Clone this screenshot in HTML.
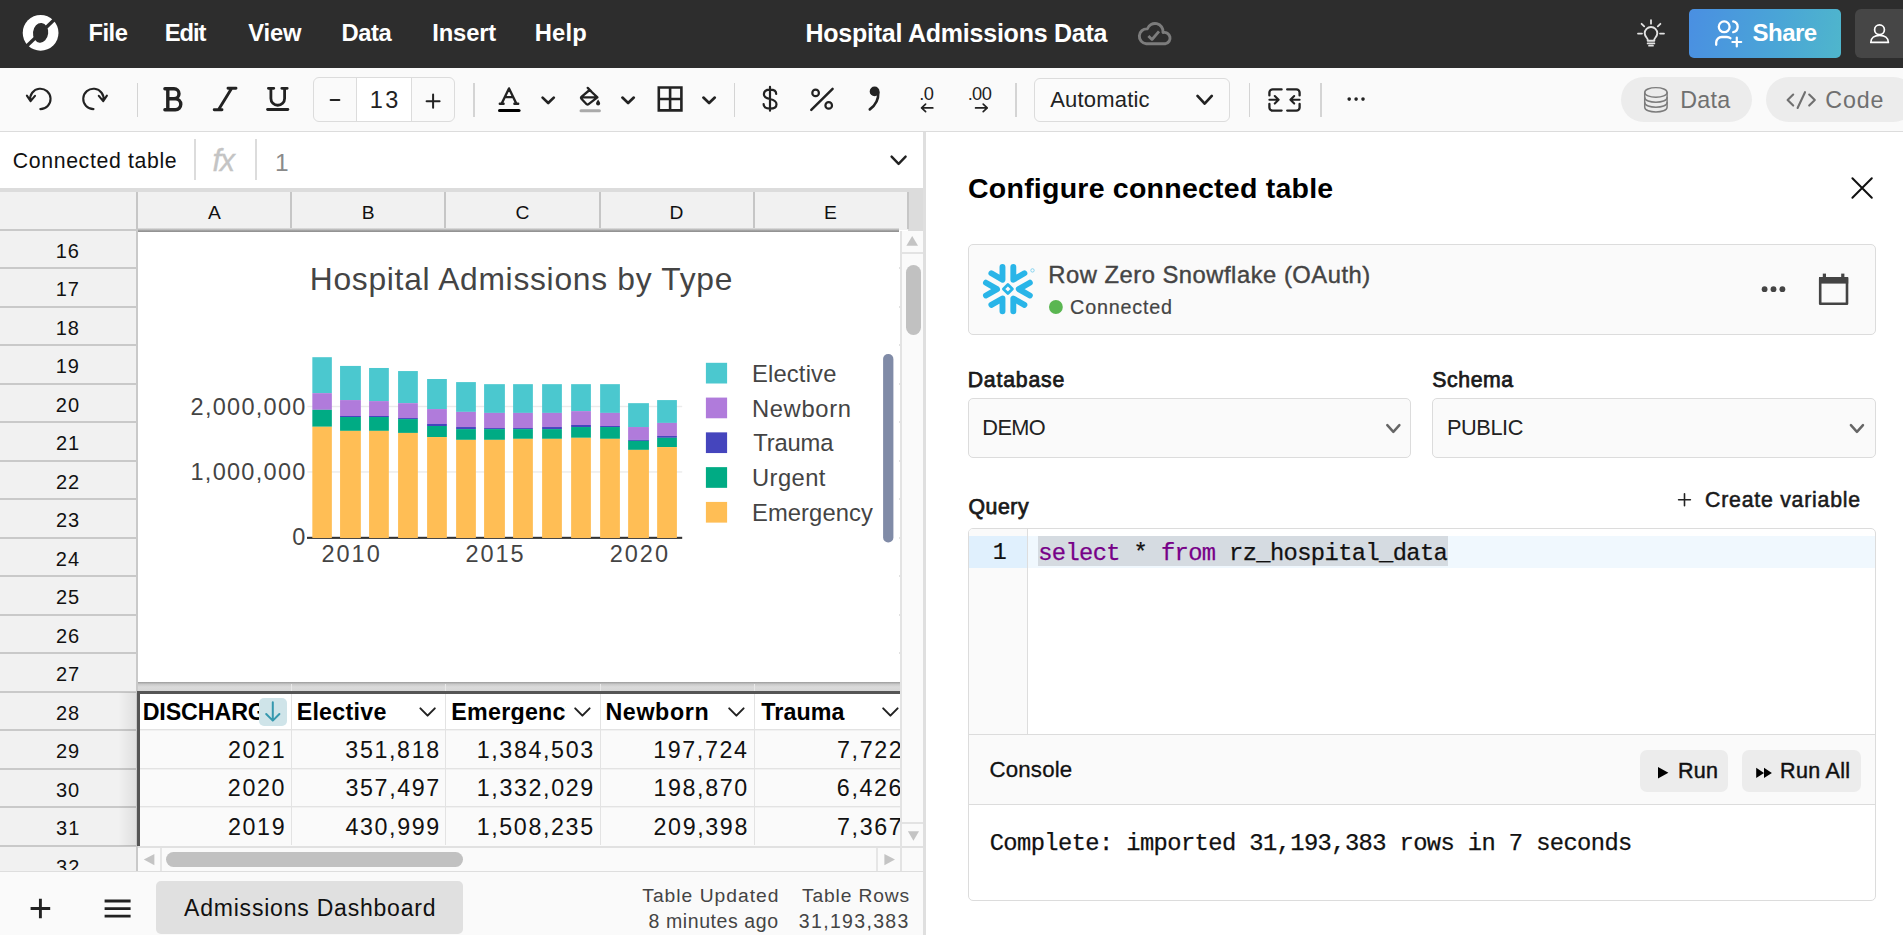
<!DOCTYPE html>
<html lang="en"><head><meta charset="utf-8"><title>Hospital Admissions Data</title><style>
html,body{margin:0;padding:0;overflow:hidden}
html{width:1903px;height:935px}
body{width:1903px;height:935px;overflow:hidden;background:#fff;position:relative;font-family:"Liberation Sans",sans-serif;color:#000}
.b{position:absolute;box-sizing:border-box}
.t{position:absolute;white-space:pre;line-height:1;display:block}
svg{overflow:visible}
</style></head>
<body>
<div class="b " style="left:0px;top:0px;width:1903px;height:68px;background:#2d2d2d;"></div>
<div class="b " style="left:1689px;top:9px;width:152px;height:49px;background:linear-gradient(100deg,#4a8fe2 0%,#4aa6d6 60%,#4fb6cc 100%);border-radius:5px"></div>
<div class="b " style="left:1855px;top:9px;width:60px;height:49px;background:#464646;border-radius:6px"></div>
<div class="b " style="left:0px;top:68px;width:1903px;height:64px;background:#fafafa;border-bottom:1px solid #dcdcdc"></div>
<div class="b " style="left:136.6px;top:82.5px;width:1.6px;height:34px;background:#d4d4d4;"></div>
<div class="b " style="left:473px;top:82.5px;width:1.6px;height:34px;background:#d4d4d4;"></div>
<div class="b " style="left:733.6px;top:82.5px;width:1.6px;height:34px;background:#d4d4d4;"></div>
<div class="b " style="left:1015.2px;top:82.5px;width:1.6px;height:34px;background:#d4d4d4;"></div>
<div class="b " style="left:1248.6px;top:82.5px;width:1.6px;height:34px;background:#d4d4d4;"></div>
<div class="b " style="left:1320px;top:82.5px;width:1.6px;height:34px;background:#d4d4d4;"></div>
<div class="b " style="left:313px;top:77px;width:142px;height:45px;background:#fafafa;border:1px solid #dcdcdc;border-radius:6px"></div>
<div class="b " style="left:356px;top:78px;width:56px;height:43px;background:#fff;border-left:1px solid #dcdcdc;border-right:1px solid #dcdcdc"></div>
<div class="b " style="left:1034px;top:78px;width:196px;height:44px;background:#fbfbfb;border:1px solid #dcdcdc;border-radius:6px"></div>
<div class="b " style="left:1621.2px;top:77px;width:130.5px;height:45px;background:#ececec;border-radius:22.5px"></div>
<div class="b " style="left:1766px;top:77px;width:150px;height:45px;background:#ececec;border-radius:22.5px"></div>
<div class="b " style="left:0px;top:132px;width:924px;height:56.2px;background:#fff;"></div>
<div class="b " style="left:194.2px;top:139.4px;width:1.7px;height:41px;background:#dcdcdc;"></div>
<div class="b " style="left:255.2px;top:139.4px;width:1.7px;height:41px;background:#dcdcdc;"></div>
<div class="b " style="left:0px;top:188.2px;width:924px;height:3.8px;background:#dcdcdc;"></div>
<div class="b " style="left:0px;top:192px;width:908px;height:38px;background:#f1f1f1;"></div>
<div class="b " style="left:908px;top:192px;width:16px;height:40px;background:#dcdcdc;"></div>
<div class="b " style="left:136px;top:192px;width:2px;height:37px;background:#c6c6c6;"></div>
<div class="b " style="left:290px;top:192px;width:2px;height:37px;background:#c6c6c6;"></div>
<div class="b " style="left:444px;top:192px;width:2px;height:37px;background:#c6c6c6;"></div>
<div class="b " style="left:599px;top:192px;width:2px;height:37px;background:#c6c6c6;"></div>
<div class="b " style="left:753px;top:192px;width:2px;height:37px;background:#c6c6c6;"></div>
<div class="b " style="left:907px;top:192px;width:2px;height:37px;background:#c6c6c6;"></div>
<div class="b " style="left:138px;top:231px;width:763px;height:616px;background:#fff;"></div>
<div class="b " style="left:899px;top:267px;width:3px;height:2px;background:#e2e2e2;"></div>
<div class="b " style="left:899px;top:306px;width:3px;height:2px;background:#e2e2e2;"></div>
<div class="b " style="left:899px;top:344px;width:3px;height:2px;background:#e2e2e2;"></div>
<div class="b " style="left:899px;top:383px;width:3px;height:2px;background:#e2e2e2;"></div>
<div class="b " style="left:899px;top:421px;width:3px;height:2px;background:#e2e2e2;"></div>
<div class="b " style="left:899px;top:460px;width:3px;height:2px;background:#e2e2e2;"></div>
<div class="b " style="left:899px;top:498px;width:3px;height:2px;background:#e2e2e2;"></div>
<div class="b " style="left:899px;top:537px;width:3px;height:2px;background:#e2e2e2;"></div>
<div class="b " style="left:899px;top:575px;width:3px;height:2px;background:#e2e2e2;"></div>
<div class="b " style="left:899px;top:614px;width:3px;height:2px;background:#e2e2e2;"></div>
<div class="b " style="left:899px;top:652px;width:3px;height:2px;background:#e2e2e2;"></div>
<div class="b " style="left:138px;top:682px;width:762px;height:9px;background:linear-gradient(#9a9a9a 0%,#c9c9c9 25%,#dadada 55%,#d6d6d6 100%);"></div>
<div class="b " style="left:291px;top:684px;width:1px;height:7px;background:#e9e9e9;"></div>
<div class="b " style="left:445px;top:684px;width:1px;height:7px;background:#e9e9e9;"></div>
<div class="b " style="left:600px;top:684px;width:1px;height:7px;background:#e9e9e9;"></div>
<div class="b " style="left:754px;top:684px;width:1px;height:7px;background:#e9e9e9;"></div>
<div class="b " style="left:138px;top:228px;width:761px;height:4px;background:linear-gradient(#e4e4e4 0%,#c6c6c6 30%,#a0a0a0 65%,#8c8c8c 100%);"></div>
<div class="b " style="left:138px;top:232px;width:761px;height:450px;background:#fff;"></div>
<div class="b " style="left:0px;top:229px;width:136px;height:646px;background:#f1f1f1;"></div>
<div class="b " style="left:136px;top:229px;width:2px;height:646px;background:#c9c9c9;"></div>
<div class="b " style="left:0px;top:229px;width:137px;height:2px;background:#c9c9c9;"></div>
<div class="b " style="left:0px;top:267px;width:137px;height:2px;background:#c9c9c9;"></div>
<div class="b " style="left:0px;top:306px;width:137px;height:2px;background:#c9c9c9;"></div>
<div class="b " style="left:0px;top:344px;width:137px;height:2px;background:#c9c9c9;"></div>
<div class="b " style="left:0px;top:383px;width:137px;height:2px;background:#c9c9c9;"></div>
<div class="b " style="left:0px;top:421px;width:137px;height:2px;background:#c9c9c9;"></div>
<div class="b " style="left:0px;top:460px;width:137px;height:2px;background:#c9c9c9;"></div>
<div class="b " style="left:0px;top:498px;width:137px;height:2px;background:#c9c9c9;"></div>
<div class="b " style="left:0px;top:537px;width:137px;height:2px;background:#c9c9c9;"></div>
<div class="b " style="left:0px;top:575px;width:137px;height:2px;background:#c9c9c9;"></div>
<div class="b " style="left:0px;top:614px;width:137px;height:2px;background:#c9c9c9;"></div>
<div class="b " style="left:0px;top:652px;width:137px;height:2px;background:#c9c9c9;"></div>
<div class="b " style="left:0px;top:691px;width:137px;height:2px;background:#c9c9c9;"></div>
<div class="b " style="left:0px;top:729px;width:137px;height:2px;background:#c9c9c9;"></div>
<div class="b " style="left:0px;top:768px;width:137px;height:2px;background:#c9c9c9;"></div>
<div class="b " style="left:0px;top:806px;width:137px;height:2px;background:#c9c9c9;"></div>
<div class="b " style="left:0px;top:845px;width:137px;height:2px;background:#c9c9c9;"></div>
<div class="b " style="left:0px;top:883px;width:137px;height:2px;background:#c9c9c9;"></div>
<div class="b " style="left:138px;top:693.8px;width:762.5px;height:35.4px;background:#fff;"></div>
<div class="b " style="left:138px;top:729.2px;width:762.5px;height:116.5px;background:#fafafa;"></div>
<div class="b " style="left:138px;top:729px;width:762px;height:1px;background:#e3e3e3;"></div>
<div class="b " style="left:138px;top:730px;width:762px;height:1px;background:#f1f1f1;"></div>
<div class="b " style="left:138px;top:768px;width:762px;height:1px;background:#e3e3e3;"></div>
<div class="b " style="left:138px;top:769px;width:762px;height:1px;background:#f1f1f1;"></div>
<div class="b " style="left:138px;top:806px;width:762px;height:1px;background:#e3e3e3;"></div>
<div class="b " style="left:138px;top:807px;width:762px;height:1px;background:#f1f1f1;"></div>
<div class="b " style="left:291px;top:694px;width:1px;height:151px;background:#e3e3e3;"></div>
<div class="b " style="left:445px;top:694px;width:1px;height:151px;background:#e3e3e3;"></div>
<div class="b " style="left:600px;top:694px;width:1px;height:151px;background:#e3e3e3;"></div>
<div class="b " style="left:754px;top:694px;width:1px;height:151px;background:#e3e3e3;"></div>
<div class="b " style="left:136.5px;top:691px;width:764px;height:3.1px;background:#555;"></div>
<div class="b " style="left:136.5px;top:691px;width:3.2px;height:154.6px;background:#555;"></div>
<div class="b " style="left:118px;top:692px;width:18px;height:154px;background:linear-gradient(90deg,rgba(0,0,0,0),rgba(0,0,0,0.07));"></div>
<div class="b " style="left:259.1px;top:697.8px;width:27.5px;height:27.8px;background:#cfe4e9;border-radius:5px"></div>
<div class="b " style="left:900px;top:231px;width:24px;height:616px;background:#fafafa;"></div>
<div class="b " style="left:902px;top:252px;width:22px;height:2px;background:#e3e3e3;"></div>
<div class="b " style="left:902px;top:822px;width:22px;height:2px;background:#e3e3e3;"></div>
<div class="b " style="left:906px;top:265px;width:15px;height:70px;background:#c1c1c1;border-radius:7.5px"></div>
<div class="b " style="left:138px;top:846px;width:786px;height:26px;background:#fafafa;"></div>
<div class="b " style="left:138px;top:846px;width:786px;height:2px;background:#e1e1e1;"></div>
<div class="b " style="left:160px;top:848px;width:2px;height:24px;background:#e6e6e6;"></div>
<div class="b " style="left:900px;top:231px;width:2px;height:641px;background:#e3e3e3;"></div>
<div class="b " style="left:876px;top:848px;width:2px;height:24px;background:#e6e6e6;"></div>
<div class="b " style="left:166px;top:852px;width:297px;height:15px;background:#c1c1c1;border-radius:7.5px"></div>
<div class="b " style="left:0px;top:871.4px;width:924px;height:64px;background:#fafafa;border-top:1.7px solid #dedede"></div>
<div class="b " style="left:156px;top:881px;width:307px;height:52.8px;background:#e0e0e0;border-radius:5px"></div>
<div class="b " style="left:923.4px;top:131.6px;width:2.7px;height:804px;background:#dfdfdf;"></div>
<div class="b " style="left:926px;top:132px;width:977px;height:803px;background:#fff;"></div>
<div class="b " style="left:968px;top:244px;width:908px;height:91px;background:#fafafa;border:1px solid #dcdcdc;border-radius:5px"></div>
<div class="b " style="left:968px;top:398px;width:443px;height:60px;background:#fafafa;border:1px solid #dcdcdc;border-radius:5px"></div>
<div class="b " style="left:1432px;top:398px;width:444px;height:60px;background:#fafafa;border:1px solid #dcdcdc;border-radius:5px"></div>
<div class="b " style="left:968px;top:528px;width:908px;height:373px;background:#fff;border:1px solid #dcdcdc;border-radius:5px"></div>
<div class="b " style="left:969px;top:529px;width:59px;height:206px;background:#fafafa;border-right:1px solid #dddddd;border-top-left-radius:4px"></div>
<div class="b " style="left:969px;top:536px;width:58px;height:32px;background:#e0f0fd;"></div>
<div class="b " style="left:1028px;top:536px;width:847px;height:32px;background:#f0f8fe;"></div>
<div class="b " style="left:1038px;top:536px;width:410px;height:30px;background:#d5dbe1;"></div>
<div class="b " style="left:969px;top:734px;width:906px;height:71px;background:#fafafa;border-top:1px solid #dcdcdc;border-bottom:1px solid #dcdcdc"></div>
<div class="b " style="left:1640px;top:750px;width:88px;height:42px;background:#ececec;border-radius:7px"></div>
<div class="b " style="left:1742px;top:750px;width:119px;height:42px;background:#ececec;border-radius:7px"></div>
<svg class="b" style="left:0px;top:0px;pointer-events:none" width="1903" height="935" viewBox="0 0 1903 935"><circle cx="40.6" cy="32.8" r="17.9" fill="#fff"/>
<ellipse cx="40.6" cy="32.8" rx="7.6" ry="9.9" fill="#2d2d2d" transform="rotate(6 40.6 32.8)"/>
<path d="M26.0,46.8 L55.2,18.799999999999997" stroke="#2d2d2d" stroke-width="3.3" fill="none"/>
<path d="M1146.2,43.7 H1165.6 A5.7,5.7 0 1 0 1163,32.5 A8.1,8.1 0 0 0 1147.3,28.9 A7.4,7.4 0 1 0 1146.2,43.7 Z" fill="none" stroke="#7c7c7c" stroke-width="2.9" stroke-linecap="round" stroke-linejoin="round" />
<path d="M1148.4,35.9 L1152,39.5 L1159,31.4" fill="none" stroke="#7c7c7c" stroke-width="2.8"  stroke-linejoin="round" stroke-linecap="butt"/>
<path d="M1647.6,43.4 H1654.4 M1649,45.7 H1653" fill="none" stroke="#e2e2e2" stroke-width="1.7" stroke-linecap="round" stroke-linejoin="round" />
<path d="M1647.7,40.7 H1654.3 V39.6 C1654.3,38.2 1657.3,36.6 1657.3,33.3 A6.3,6.3 0 0 0 1644.7,33.3 C1644.7,36.6 1647.7,38.2 1647.7,39.6 Z" fill="none" stroke="#e2e2e2" stroke-width="1.9" stroke-linecap="round" stroke-linejoin="round" />
<path d="M1651,20.2 V23.7 M1641.6,23.8 L1644.2,26.4 M1660.4,23.8 L1657.8,26.4 M1638,33.6 H1642 M1660,33.6 H1664" fill="none" stroke="#e2e2e2" stroke-width="1.8" stroke-linecap="round" stroke-linejoin="round" />
<circle cx="1724.2" cy="26.8" r="5.4" fill="none" stroke="#fff" stroke-width="2.3"/>
<path d="M1716.2,44.8 V42.6 A5.6,5.6 0 0 1 1721.8,37 H1727 A5.6,5.6 0 0 1 1730.4,38.2" fill="none" stroke="#fff" stroke-width="2.3" stroke-linecap="round" stroke-linejoin="round" />
<path d="M1733.2,21.4 A5.5,5.5 0 0 1 1733.2,32.2" fill="none" stroke="#fff" stroke-width="2.3" stroke-linecap="round" stroke-linejoin="round" />
<path d="M1736.8,37.6 V46.4 M1732.4,42 H1741.2" fill="none" stroke="#fff" stroke-width="2.2" stroke-linecap="round" stroke-linejoin="round" />
<circle cx="1879.5" cy="29.7" r="4.9" fill="none" stroke="#fff" stroke-width="1.7"/>
<path d="M1870.8,42.4 H1888.4 C1888.4,37.8 1884.6,35.3 1879.6,35.3 C1874.6,35.3 1870.8,37.8 1870.8,42.4 Z" fill="none" stroke="#fff" stroke-width="1.7" stroke-linecap="round" stroke-linejoin="round" />
<path d="M30.3,100.6 A10.2,10.2 0 1 1 40.3,109.1 M26.9,95.7 L30.6,101.2 L35,95.9" fill="none" stroke="#222" stroke-width="2.1" stroke-linecap="round" stroke-linejoin="round" />
<path d="M103.5,100.6 A10.2,10.2 0 1 0 93.5,109.1 M106.9,95.7 L103.2,101.2 L98.8,95.9" fill="none" stroke="#222" stroke-width="2.1" stroke-linecap="round" stroke-linejoin="round" />
<path d="M164.9,88.8 H174 A5,5 0 0 1 174,98.8 H167.8 M174,98.8 H175.3 A5.5,5.5 0 0 1 175.3,109.8 H164.9 M167.8,88.8 V109.8" fill="none" stroke="#222" stroke-width="3.4" stroke-linecap="round" stroke-linejoin="round" />
<path d="M228,88.2 H236 M214.2,109.8 H222 M231.7,88.2 L218.5,109.8" fill="none" stroke="#222" stroke-width="2.9" stroke-linecap="round" stroke-linejoin="round" />
<path d="M268.4,88.3 H273.8 M281.8,88.3 H287.2 M270.9,88.3 V98.4 A6.85,6.85 0 0 0 284.6,98.4 V88.3" fill="none" stroke="#222" stroke-width="2.8" stroke-linecap="round" stroke-linejoin="round" />
<path d="M267.6,109.5 H287.8" fill="none" stroke="#222" stroke-width="2.9" stroke-linecap="round" stroke-linejoin="round" />
<path d="M330.6,99.9 H339.4" fill="none" stroke="#222" stroke-width="2.0" stroke-linecap="round" stroke-linejoin="round" />
<path d="M426.6,101.2 H439.6 M433.1,94.6 V107.8" fill="none" stroke="#222" stroke-width="2.0" stroke-linecap="round" stroke-linejoin="round" />
<path d="M499.8,103.8 H503.6 M514.4,103.8 H518.2 M501.7,103.6 L509,88.4 L516.3,103.6 M505,97.1 H513" fill="none" stroke="#222" stroke-width="2.4" stroke-linecap="round" stroke-linejoin="round" />
<rect x="498" y="108.9" width="22.6" height="3.2" rx="1.6" fill="#000"/>
<path d="M542.6,97.6 L548.2,103.0 L553.8,97.6" fill="none" stroke="#222" stroke-width="2.7" stroke-linecap="round" stroke-linejoin="round" />
<path d="M589.6,90 L597.4,97.4 L588.6,104.2 Q587.6,105 586.6,104.2 L581.4,98.8 Q580.6,97.8 581.4,96.9 Z M581,97.4 H597.4 M587.7,87.9 L591.2,91.4" fill="none" stroke="#222" stroke-width="2.3" stroke-linecap="round" stroke-linejoin="round" />
<path d="M598.1,99.6 C599.3,101.2 600.1,102.4 600.1,103.5 A2,2 0 0 1 596.1,103.5 C596.1,102.4 596.9,101.2 598.1,99.6 Z" fill="#222"/>
<rect x="579.5" y="109.2" width="21.4" height="3" rx="1.5" fill="#aaa"/>
<path d="M622.4,97.6 L628.0999999999999,103.0 L633.8,97.6" fill="none" stroke="#222" stroke-width="2.7" stroke-linecap="round" stroke-linejoin="round" />
<path d="M658.8,87.5 H681.4 V110.4 H658.8 Z M670.1,87.5 V110.4 M658.8,99 H681.4" fill="none" stroke="#222" stroke-width="2.6" stroke-linecap="round"  stroke-linejoin="miter"/>
<path d="M703.4,97.6 L709.0999999999999,103.0 L714.8,97.6" fill="none" stroke="#222" stroke-width="2.7" stroke-linecap="round" stroke-linejoin="round" />
<path d="M770,86.9 V110.7 M776.2,93.9 C776.2,91 773.6,89.6 770,89.6 C766.4,89.6 763.9,91.2 763.9,94.2 C763.9,97.3 766.6,98.3 770,99 C773.6,99.8 776.5,100.9 776.5,104.2 C776.5,107.2 773.8,108.6 770,108.6 C766.2,108.6 763.6,107 763.6,104" fill="none" stroke="#222" stroke-width="2.2" stroke-linecap="round" stroke-linejoin="round" />
<path d="M811.3,109.8 L832.6,88.9" fill="none" stroke="#222" stroke-width="2.5" stroke-linecap="round" stroke-linejoin="round" />
<circle cx="815.6" cy="92.9" r="3.3" fill="none" stroke="#222" stroke-width="2.2"/>
<circle cx="828.7" cy="105.4" r="3.3" fill="none" stroke="#222" stroke-width="2.2"/>
<circle cx="874.6" cy="91.4" r="4.9" fill="#222" stroke="none" stroke-width="0"/>
<path d="M878.3,92.6 C878.6,100 875,105.6 869.8,109.4" fill="none" stroke="#222" stroke-width="2.6" stroke-linecap="round" stroke-linejoin="round" />
<path d="M921.6,107.9 H932.8 M925.6,104.2 L921.6,107.9 L925.6,111.6" fill="none" stroke="#222" stroke-width="1.7" stroke-linecap="round" stroke-linejoin="round" />
<path d="M975.6,107.9 H987.2 M983.2,104.2 L987.2,107.9 L983.2,111.6" fill="none" stroke="#222" stroke-width="1.7" stroke-linecap="round" stroke-linejoin="round" />
<path d="M1197.5,95.9 L1204.65,103.6 L1211.8,95.9" fill="none" stroke="#222" stroke-width="2.7" stroke-linecap="round" stroke-linejoin="round" />
<path d="M1281.6,89.4 H1272.6 A3.2,3.2 0 0 0 1269.4,92.6 V95.4 M1269.4,104 V107.4 A3.2,3.2 0 0 0 1272.6,110.6 H1281.6" fill="none" stroke="#222" stroke-width="2.3" stroke-linecap="round" stroke-linejoin="round" />
<path d="M1287.2,89.4 H1296.4 A3.2,3.2 0 0 1 1299.6,92.6 V95.4 M1299.6,104 V107.4 A3.2,3.2 0 0 1 1296.4,110.6 H1287.2" fill="none" stroke="#222" stroke-width="2.3" stroke-linecap="round" stroke-linejoin="round" />
<path d="M1269.4,99.8 H1278.4 M1274.8,96 L1278.6,99.8 L1274.8,103.6" fill="none" stroke="#222" stroke-width="2.1" stroke-linecap="round" stroke-linejoin="round" />
<path d="M1299.6,99.8 H1290.6 M1294.2,96 L1290.4,99.8 L1294.2,103.6" fill="none" stroke="#222" stroke-width="2.1" stroke-linecap="round" stroke-linejoin="round" />
<circle cx="1349.2" cy="99.1" r="1.8" fill="#222" stroke="none" stroke-width="0"/>
<circle cx="1356.1" cy="99.1" r="1.8" fill="#222" stroke="none" stroke-width="0"/>
<circle cx="1363" cy="99.1" r="1.8" fill="#222" stroke="none" stroke-width="0"/>
<ellipse cx="1655.9" cy="92.4" rx="11.2" ry="4.8" fill="none" stroke="#7c7c7c" stroke-width="1.45"/>
<path d="M1644.7,92.4 V107.2 C1644.7,113.6 1667.1,113.6 1667.1,107.2 V92.4" fill="none" stroke="#7c7c7c" stroke-width="1.45" stroke-linecap="round" stroke-linejoin="round" />
<path d="M1644.7,97.4 C1644.7,103.8 1667.1,103.8 1667.1,97.4 M1644.7,102.4 C1644.7,108.8 1667.1,108.8 1667.1,102.4" fill="none" stroke="#7c7c7c" stroke-width="1.45" stroke-linecap="round" stroke-linejoin="round" />
<path d="M1793.2,94.6 L1787.6,100.1 L1793.2,105.6 M1805,92.2 L1797.6,108 M1809.2,94.6 L1814.8,100.1 L1809.2,105.6" fill="none" stroke="#707070" stroke-width="2.1" stroke-linecap="round" stroke-linejoin="round" />
<path d="M891.6,156.6 L898.6,163.9 L905.6,156.6" fill="none" stroke="#222" stroke-width="2.4" stroke-linecap="round" stroke-linejoin="round" />
<path d="M420.40000000000003,708.4 L427.6,715.6 L434.8,708.4" fill="none" stroke="#222" stroke-width="2.0" stroke-linecap="round" stroke-linejoin="round" />
<path d="M575.1999999999999,708.4 L582.4,715.6 L589.6,708.4" fill="none" stroke="#222" stroke-width="2.0" stroke-linecap="round" stroke-linejoin="round" />
<path d="M729.1999999999999,708.4 L736.4,715.6 L743.6,708.4" fill="none" stroke="#222" stroke-width="2.0" stroke-linecap="round" stroke-linejoin="round" />
<path d="M883.1999999999999,708.4 L890.4,715.6 L897.6,708.4" fill="none" stroke="#222" stroke-width="2.0" stroke-linecap="round" stroke-linejoin="round" />
<path d="M272.8,702.2 V720.4 M266.2,714 L272.8,720.6 L279.4,714" fill="none" stroke="#3598ae" stroke-width="2.0" stroke-linecap="round" stroke-linejoin="round" />
<path d="M912.2,236 L918,245.8 H906.4 Z" fill="#c4c4c4"/>
<path d="M907.9,831.2 H919 L913.45,840.8 Z" fill="#c4c4c4"/>
<path d="M143.8,859.6 L154.4,854 V865.2 Z" fill="#c4c4c4"/>
<path d="M895,859.6 L884.4,854 V865.2 Z" fill="#c4c4c4"/>
<path d="M30.6,908.5 H50.2 M40.4,898.8 V918.2" fill="none" stroke="#222" stroke-width="2.9"  stroke-linejoin="round" stroke-linecap="butt"/>
<path d="M104.6,901 H130.6 M104.6,908.6 H130.6 M104.6,916.2 H130.6" fill="none" stroke="#222" stroke-width="2.8"  stroke-linejoin="round" stroke-linecap="butt"/>
<path d="M1852.4,178.3 L1871.8,197.8 M1871.8,178.3 L1852.4,197.8" fill="none" stroke="#111" stroke-width="2.0" stroke-linecap="round" stroke-linejoin="round" />
<path d="M1029.84,282.70 L1018.75,289.10 L1029.84,295.50" fill="none" stroke="#29b5e8" stroke-width="5.9" stroke-linecap="round" stroke-linejoin="round" />
<path d="M1013.32,266.90 L1013.32,279.70 L1024.41,273.30" fill="none" stroke="#29b5e8" stroke-width="5.9" stroke-linecap="round" stroke-linejoin="round" />
<path d="M991.39,273.30 L1002.48,279.70 L1002.48,266.90" fill="none" stroke="#29b5e8" stroke-width="5.9" stroke-linecap="round" stroke-linejoin="round" />
<path d="M985.96,295.50 L997.05,289.10 L985.96,282.70" fill="none" stroke="#29b5e8" stroke-width="5.9" stroke-linecap="round" stroke-linejoin="round" />
<path d="M1002.48,311.30 L1002.48,298.50 L991.39,304.90" fill="none" stroke="#29b5e8" stroke-width="5.9" stroke-linecap="round" stroke-linejoin="round" />
<path d="M1024.41,304.90 L1013.32,298.50 L1013.32,311.30" fill="none" stroke="#29b5e8" stroke-width="5.9" stroke-linecap="round" stroke-linejoin="round" />
<path d="M1007.9,284.6 L1012.4,289.1 L1007.9,293.6 L1003.4,289.1 Z" fill="none" stroke="#29b5e8" stroke-width="2.8" stroke-linecap="round" stroke-linejoin="round" />
<circle cx="1032.5" cy="270.4" r="1.7" fill="none" stroke="#7dd0ef" stroke-width="0.9"/>
<circle cx="1055.9" cy="307" r="6.9" fill="#5ab651" stroke="none" stroke-width="0"/>
<circle cx="1764.6" cy="289.2" r="2.9" fill="#444" stroke="none" stroke-width="0"/>
<circle cx="1773.5" cy="289.2" r="2.9" fill="#444" stroke="none" stroke-width="0"/>
<circle cx="1782.4" cy="289.2" r="2.9" fill="#444" stroke="none" stroke-width="0"/>
<path d="M1820.2,278.4 H1847 V303.8 H1820.2 Z" fill="none" stroke="#444" stroke-width="2.6" stroke-linejoin="round"/>
<rect x="1819" y="277" width="29.2" height="6.6" fill="#444"/>
<rect x="1822.8" y="273.6" width="3.2" height="5" fill="#444"/><rect x="1841.2" y="273.6" width="3.2" height="5" fill="#444"/>
<path d="M1387.3,425.2 L1393.35,431.8 L1399.4,425.2" fill="none" stroke="#666" stroke-width="2.5" stroke-linecap="round" stroke-linejoin="round" />
<path d="M1850.9,425.2 L1856.95,431.8 L1863,425.2" fill="none" stroke="#666" stroke-width="2.5" stroke-linecap="round" stroke-linejoin="round" />
<path d="M1678.6,499.8 H1690.4 M1684.5,493.8 V505.8" fill="none" stroke="#222" stroke-width="1.6" stroke-linecap="round" stroke-linejoin="round" />
<path d="M1658,766.9 L1668.4,772.7 L1658,778.5 Z" fill="#000"/>
<path d="M1756.2,767.7 L1764,772.9 L1756.2,778.1 Z M1764,767.7 L1771.9,772.9 L1764,778.1 Z" fill="#000"/></svg>
<svg class="b" style="left:0px;top:0px;pointer-events:none" width="1903" height="935" viewBox="0 0 1903 935"><rect x="307.4" y="405.79" width="374.8" height="1.4" fill="#ebebeb"/>
<rect x="307.4" y="471.26" width="374.8" height="1.4" fill="#ebebeb"/>
<rect x="307" y="536.8" width="375.2" height="2.1" fill="#333"/>
<rect x="312.34" y="357.20" width="19.51" height="35.94" fill="#4bc8cf"/>
<rect x="312.34" y="393.14" width="19.51" height="16.69" fill="#b07bdb"/>
<rect x="312.34" y="409.83" width="19.51" height="16.94" fill="#00ab84"/>
<rect x="312.34" y="426.78" width="19.51" height="111.22" fill="#ffbe55"/>
<rect x="340.06" y="365.93" width="20.80" height="34.15" fill="#4bc8cf"/>
<rect x="340.06" y="400.08" width="20.80" height="15.92" fill="#b07bdb"/>
<rect x="340.06" y="415.99" width="20.80" height="1.03" fill="#4545bd"/>
<rect x="340.06" y="417.02" width="20.80" height="13.86" fill="#00ab84"/>
<rect x="340.06" y="430.88" width="20.80" height="107.12" fill="#ffbe55"/>
<rect x="369.07" y="367.98" width="19.77" height="33.12" fill="#4bc8cf"/>
<rect x="369.07" y="401.10" width="19.77" height="14.89" fill="#b07bdb"/>
<rect x="369.07" y="415.99" width="19.77" height="1.03" fill="#4545bd"/>
<rect x="369.07" y="417.02" width="19.77" height="13.86" fill="#00ab84"/>
<rect x="369.07" y="430.88" width="19.77" height="107.12" fill="#ffbe55"/>
<rect x="398.08" y="371.06" width="19.77" height="32.09" fill="#4bc8cf"/>
<rect x="398.08" y="403.16" width="19.77" height="14.89" fill="#b07bdb"/>
<rect x="398.08" y="418.05" width="19.77" height="1.03" fill="#4545bd"/>
<rect x="398.08" y="419.07" width="19.77" height="13.86" fill="#00ab84"/>
<rect x="398.08" y="432.94" width="19.77" height="105.06" fill="#ffbe55"/>
<rect x="427.09" y="379.02" width="19.77" height="30.04" fill="#4bc8cf"/>
<rect x="427.09" y="409.06" width="19.77" height="14.89" fill="#b07bdb"/>
<rect x="427.09" y="423.95" width="19.77" height="2.05" fill="#4545bd"/>
<rect x="427.09" y="426.01" width="19.77" height="11.04" fill="#00ab84"/>
<rect x="427.09" y="437.04" width="19.77" height="100.96" fill="#ffbe55"/>
<rect x="456.11" y="382.10" width="19.77" height="29.78" fill="#4bc8cf"/>
<rect x="456.11" y="411.88" width="19.77" height="15.15" fill="#b07bdb"/>
<rect x="456.11" y="427.03" width="19.77" height="2.05" fill="#4545bd"/>
<rect x="456.11" y="429.09" width="19.77" height="10.78" fill="#00ab84"/>
<rect x="456.11" y="439.87" width="19.77" height="98.13" fill="#ffbe55"/>
<rect x="484.09" y="384.16" width="20.80" height="28.75" fill="#4bc8cf"/>
<rect x="484.09" y="412.91" width="20.80" height="15.15" fill="#b07bdb"/>
<rect x="484.09" y="428.06" width="20.80" height="1.03" fill="#4545bd"/>
<rect x="484.09" y="429.09" width="20.80" height="10.78" fill="#00ab84"/>
<rect x="484.09" y="439.87" width="20.80" height="98.13" fill="#ffbe55"/>
<rect x="513.10" y="384.16" width="19.77" height="28.75" fill="#4bc8cf"/>
<rect x="513.10" y="412.91" width="19.77" height="15.15" fill="#b07bdb"/>
<rect x="513.10" y="428.06" width="19.77" height="1.03" fill="#4545bd"/>
<rect x="513.10" y="429.09" width="19.77" height="9.76" fill="#00ab84"/>
<rect x="513.10" y="438.84" width="19.77" height="99.16" fill="#ffbe55"/>
<rect x="542.11" y="384.16" width="19.77" height="28.75" fill="#4bc8cf"/>
<rect x="542.11" y="412.91" width="19.77" height="14.12" fill="#b07bdb"/>
<rect x="542.11" y="427.03" width="19.77" height="2.05" fill="#4545bd"/>
<rect x="542.11" y="429.09" width="19.77" height="9.76" fill="#00ab84"/>
<rect x="542.11" y="438.84" width="19.77" height="99.16" fill="#ffbe55"/>
<rect x="571.12" y="384.16" width="19.77" height="26.96" fill="#4bc8cf"/>
<rect x="571.12" y="411.11" width="19.77" height="13.86" fill="#b07bdb"/>
<rect x="571.12" y="424.98" width="19.77" height="2.05" fill="#4545bd"/>
<rect x="571.12" y="427.03" width="19.77" height="10.78" fill="#00ab84"/>
<rect x="571.12" y="437.81" width="19.77" height="100.19" fill="#ffbe55"/>
<rect x="600.13" y="384.16" width="19.77" height="28.75" fill="#4bc8cf"/>
<rect x="600.13" y="412.91" width="19.77" height="13.09" fill="#b07bdb"/>
<rect x="600.13" y="426.01" width="19.77" height="1.03" fill="#4545bd"/>
<rect x="600.13" y="427.03" width="19.77" height="11.81" fill="#00ab84"/>
<rect x="600.13" y="438.84" width="19.77" height="99.16" fill="#ffbe55"/>
<rect x="628.12" y="403.16" width="20.80" height="23.88" fill="#4bc8cf"/>
<rect x="628.12" y="427.03" width="20.80" height="12.84" fill="#b07bdb"/>
<rect x="628.12" y="439.87" width="20.80" height="1.03" fill="#4545bd"/>
<rect x="628.12" y="440.90" width="20.80" height="8.99" fill="#00ab84"/>
<rect x="628.12" y="449.88" width="20.80" height="88.12" fill="#ffbe55"/>
<rect x="657.13" y="400.08" width="19.77" height="22.85" fill="#4bc8cf"/>
<rect x="657.13" y="422.92" width="19.77" height="13.09" fill="#b07bdb"/>
<rect x="657.13" y="436.02" width="19.77" height="1.80" fill="#4545bd"/>
<rect x="657.13" y="437.81" width="19.77" height="9.24" fill="#00ab84"/>
<rect x="657.13" y="447.06" width="19.77" height="90.94" fill="#ffbe55"/>
<rect x="705.9" y="362.80" width="21.2" height="20.7" fill="#4bc8cf"/>
<rect x="705.9" y="397.58" width="21.2" height="20.7" fill="#b07bdb"/>
<rect x="705.9" y="432.36" width="21.2" height="20.7" fill="#4545bd"/>
<rect x="705.9" y="467.14" width="21.2" height="20.7" fill="#00ab84"/>
<rect x="705.9" y="501.92" width="21.2" height="20.7" fill="#ffbe55"/>
<rect x="883.1" y="354.1" width="10.3" height="188.3" rx="5" fill="#808ba7"/></svg>
<span class="t" style="left:88.41px;top:21px;font-size:23.75px;letter-spacing:-0.471px;font-weight:700;color:#fff;">File</span>
<span class="t" style="left:164.81px;top:21px;font-size:23.75px;letter-spacing:-1.059px;font-weight:700;color:#fff;">Edit</span>
<span class="t" style="left:248.14px;top:21px;font-size:23.75px;letter-spacing:-0.092px;font-weight:700;color:#fff;">View</span>
<span class="t" style="left:341.41px;top:21px;font-size:23.75px;letter-spacing:-0.413px;font-weight:700;color:#fff;">Data</span>
<span class="t" style="left:432.31px;top:21px;font-size:23.75px;letter-spacing:-0.139px;font-weight:700;color:#fff;">Insert</span>
<span class="t" style="left:534.81px;top:21px;font-size:23.75px;letter-spacing:0.166px;font-weight:700;color:#fff;">Help</span>
<span class="t" style="left:805.53px;top:21px;font-size:25.0px;letter-spacing:-0.238px;font-weight:700;color:#fff;">Hospital Admissions Data</span>
<span class="t" style="left:1752.51px;top:21px;font-size:24.0px;letter-spacing:-0.498px;font-weight:700;color:#fff;">Share</span>
<span class="t" style="left:369.71px;top:89px;font-size:23.5px;letter-spacing:2.384px;color:#222;">13</span>
<span class="t" style="left:919.23px;top:85px;font-size:18.25px;letter-spacing:-0.641px;color:#222;">.0</span>
<span class="t" style="left:967.63px;top:85px;font-size:18.25px;letter-spacing:-0.595px;color:#222;">.00</span>
<span class="t" style="left:1050.16px;top:89px;font-size:22.0px;letter-spacing:0.201px;color:#222;">Automatic</span>
<span class="t" style="left:1680.29px;top:89px;font-size:23.25px;letter-spacing:0.232px;color:#707070;">Data</span>
<span class="t" style="left:1825.32px;top:89px;font-size:23.25px;letter-spacing:0.811px;color:#707070;">Code</span>
<span class="t" style="left:12.72px;top:151px;font-size:21.25px;letter-spacing:0.654px;color:#111;">Connected table</span>
<span class="t" style="left:212.57px;top:145px;font-size:30.5px;letter-spacing:-1.190px;font-style:italic;color:#c4c4c4;-webkit-text-stroke:0.35px #c4c4c4;">fx</span>
<span class="t" style="left:274.93px;top:151px;font-size:24.5px;color:#8a8a8a;">1</span>
<span class="t" style="left:207.98px;top:203px;font-size:19.25px;color:#111;">A</span>
<span class="t" style="left:361.70px;top:203px;font-size:19.25px;color:#111;">B</span>
<span class="t" style="left:515.53px;top:203px;font-size:19.25px;color:#111;">C</span>
<span class="t" style="left:669.62px;top:203px;font-size:19.25px;color:#111;">D</span>
<span class="t" style="left:824.10px;top:203px;font-size:19.25px;color:#111;">E</span>
<span class="t" style="left:55.65px;top:241px;font-size:20.0px;letter-spacing:1.000px;color:#111;">16</span>
<span class="t" style="left:55.72px;top:279px;font-size:20.0px;letter-spacing:1.000px;color:#111;">17</span>
<span class="t" style="left:55.65px;top:318px;font-size:20.0px;letter-spacing:1.000px;color:#111;">18</span>
<span class="t" style="left:55.69px;top:356px;font-size:20.0px;letter-spacing:1.000px;color:#111;">19</span>
<span class="t" style="left:55.86px;top:395px;font-size:20.0px;letter-spacing:1.000px;color:#111;">20</span>
<span class="t" style="left:55.96px;top:433px;font-size:20.0px;letter-spacing:1.000px;color:#111;">21</span>
<span class="t" style="left:55.98px;top:472px;font-size:20.0px;letter-spacing:1.000px;color:#111;">22</span>
<span class="t" style="left:55.91px;top:510px;font-size:20.0px;letter-spacing:1.000px;color:#111;">23</span>
<span class="t" style="left:55.77px;top:549px;font-size:20.0px;letter-spacing:1.000px;color:#111;">24</span>
<span class="t" style="left:55.89px;top:587px;font-size:20.0px;letter-spacing:1.000px;color:#111;">25</span>
<span class="t" style="left:55.91px;top:626px;font-size:20.0px;letter-spacing:1.000px;color:#111;">26</span>
<span class="t" style="left:55.98px;top:664px;font-size:20.0px;letter-spacing:1.000px;color:#111;">27</span>
<span class="t" style="left:55.91px;top:703px;font-size:20.0px;letter-spacing:1.000px;color:#111;">28</span>
<span class="t" style="left:55.95px;top:741px;font-size:20.0px;letter-spacing:1.000px;color:#111;">29</span>
<span class="t" style="left:55.99px;top:780px;font-size:20.0px;letter-spacing:1.000px;color:#111;">30</span>
<span class="t" style="left:56.08px;top:818px;font-size:20.0px;letter-spacing:1.000px;color:#111;">31</span>
<span class="t" style="left:56.10px;top:857px;font-size:20.0px;letter-spacing:1.000px;color:#111;height:13px;overflow:hidden;">32</span>
<span class="t" style="left:309.80px;top:264px;font-size:31.75px;letter-spacing:0.729px;color:#444;">Hospital Admissions by Type</span>
<span class="t" style="left:190.62px;top:396px;font-size:23.5px;letter-spacing:1.269px;color:#444;">2,000,000</span>
<span class="t" style="left:190.51px;top:461px;font-size:23.5px;letter-spacing:1.283px;color:#444;">1,000,000</span>
<span class="t" style="left:292.15px;top:526px;font-size:23.5px;color:#444;">0</span>
<span class="t" style="left:321.42px;top:543px;font-size:23.5px;letter-spacing:2.007px;color:#444;">2010</span>
<span class="t" style="left:465.42px;top:543px;font-size:23.5px;letter-spacing:1.930px;color:#444;">2015</span>
<span class="t" style="left:609.72px;top:543px;font-size:23.5px;letter-spacing:2.007px;color:#444;">2020</span>
<span class="t" style="left:751.95px;top:362px;font-size:23.75px;letter-spacing:0.178px;color:#444;">Elective</span>
<span class="t" style="left:751.95px;top:397px;font-size:23.75px;letter-spacing:0.657px;color:#444;">Newborn</span>
<span class="t" style="left:753.37px;top:431px;font-size:23.75px;letter-spacing:-0.182px;color:#444;">Trauma</span>
<span class="t" style="left:752.07px;top:466px;font-size:23.75px;letter-spacing:0.404px;color:#444;">Urgent</span>
<span class="t" style="left:751.95px;top:501px;font-size:23.75px;letter-spacing:0.110px;color:#444;">Emergency</span>
<span class="t" style="left:142.64px;top:701px;font-size:23.25px;letter-spacing:-0.100px;font-weight:700;width:116.36px;overflow:hidden;">DISCHARGE</span>
<span class="t" style="left:296.64px;top:701px;font-size:23.25px;letter-spacing:0.266px;font-weight:700;">Elective</span>
<span class="t" style="left:451.34px;top:701px;font-size:23.25px;letter-spacing:0.250px;font-weight:700;width:114.66px;overflow:hidden;">Emergency</span>
<span class="t" style="left:605.44px;top:701px;font-size:23.25px;letter-spacing:0.623px;font-weight:700;">Newborn</span>
<span class="t" style="left:761.24px;top:701px;font-size:23.25px;letter-spacing:0.102px;font-weight:700;">Trauma</span>
<span class="t" style="left:228.05px;top:739px;font-size:23.25px;letter-spacing:1.620px;color:#111;">2021</span>
<span class="t" style="left:345.35px;top:739px;font-size:23.25px;letter-spacing:1.620px;color:#111;">351,818</span>
<span class="t" style="left:476.73px;top:739px;font-size:23.25px;letter-spacing:1.620px;color:#111;">1,384,503</span>
<span class="t" style="left:653.22px;top:739px;font-size:23.25px;letter-spacing:1.620px;color:#111;">197,724</span>
<span class="t" style="left:837.01px;top:739px;font-size:23.25px;letter-spacing:1.620px;color:#111;width:63.39px;overflow:hidden;">7,722</span>
<span class="t" style="left:227.83px;top:777px;font-size:23.25px;letter-spacing:1.620px;color:#111;">2020</span>
<span class="t" style="left:345.51px;top:777px;font-size:23.25px;letter-spacing:1.620px;color:#111;">357,497</span>
<span class="t" style="left:476.81px;top:777px;font-size:23.25px;letter-spacing:1.620px;color:#111;">1,332,029</span>
<span class="t" style="left:653.45px;top:777px;font-size:23.25px;letter-spacing:1.620px;color:#111;">198,870</span>
<span class="t" style="left:836.86px;top:777px;font-size:23.25px;letter-spacing:1.620px;color:#111;width:63.54px;overflow:hidden;">6,426</span>
<span class="t" style="left:228.02px;top:816px;font-size:23.25px;letter-spacing:1.620px;color:#111;">2019</span>
<span class="t" style="left:345.44px;top:816px;font-size:23.25px;letter-spacing:1.620px;color:#111;">430,999</span>
<span class="t" style="left:476.68px;top:816px;font-size:23.25px;letter-spacing:1.620px;color:#111;">1,508,235</span>
<span class="t" style="left:653.55px;top:816px;font-size:23.25px;letter-spacing:1.620px;color:#111;">209,398</span>
<span class="t" style="left:837.01px;top:816px;font-size:23.25px;letter-spacing:1.620px;color:#111;width:63.39px;overflow:hidden;">7,367</span>
<span class="t" style="left:184.06px;top:897px;font-size:23.0px;letter-spacing:0.786px;color:#111;">Admissions Dashboard</span>
<span class="t" style="left:642.27px;top:886px;font-size:19.25px;letter-spacing:1.002px;color:#444;">Table Updated</span>
<span class="t" style="left:648.55px;top:912px;font-size:19.5px;letter-spacing:0.581px;color:#444;">8 minutes ago</span>
<span class="t" style="left:801.97px;top:886px;font-size:19.25px;letter-spacing:0.847px;color:#444;">Table Rows</span>
<span class="t" style="left:798.86px;top:912px;font-size:19.5px;letter-spacing:1.323px;color:#444;">31,193,383</span>
<span class="t" style="left:968.03px;top:174px;font-size:28.5px;letter-spacing:0.237px;font-weight:700;">Configure connected table</span>
<span class="t" style="left:1048.25px;top:263px;font-size:23.75px;letter-spacing:0.522px;color:#444;-webkit-text-stroke:0.4px #444;">Row Zero Snowflake (OAuth)</span>
<span class="t" style="left:1070.10px;top:298px;font-size:19.75px;letter-spacing:0.806px;color:#444;-webkit-text-stroke:0.2px #444;">Connected</span>
<span class="t" style="left:967.66px;top:370px;font-size:21.25px;letter-spacing:0.817px;color:#1a1a1a;-webkit-text-stroke:0.75px #1a1a1a;">Database</span>
<span class="t" style="left:1432.34px;top:370px;font-size:21.25px;letter-spacing:0.562px;color:#1a1a1a;-webkit-text-stroke:0.75px #1a1a1a;">Schema</span>
<span class="t" style="left:982.32px;top:417px;font-size:21.75px;letter-spacing:-0.608px;color:#222;">DEMO</span>
<span class="t" style="left:1446.92px;top:417px;font-size:21.75px;letter-spacing:-0.411px;color:#222;">PUBLIC</span>
<span class="t" style="left:968.39px;top:497px;font-size:21.25px;letter-spacing:0.595px;color:#1a1a1a;-webkit-text-stroke:0.75px #1a1a1a;">Query</span>
<span class="t" style="left:1705.12px;top:490px;font-size:21.25px;letter-spacing:0.773px;color:#1a1a1a;-webkit-text-stroke:0.55px #1a1a1a;">Create variable</span>
<span class="t" style="left:989.57px;top:759px;font-size:22.25px;letter-spacing:0.164px;color:#111;-webkit-text-stroke:0.3px #111;">Console</span>
<span class="t" style="left:1677.94px;top:761px;font-size:21.5px;letter-spacing:0.309px;color:#111;-webkit-text-stroke:0.45px #111;">Run</span>
<span class="t" style="left:1780.04px;top:761px;font-size:21.5px;letter-spacing:0.332px;color:#111;-webkit-text-stroke:0.45px #111;">Run All</span>
<span class="t" style="left:992.82px;top:542px;font-size:23.25px;font-family:'Liberation Mono',monospace;color:#111;-webkit-text-stroke:0.2px #111;">1</span>
<span class="t" style="left:1038.16px;top:542px;font-size:23.75px;letter-spacing:-0.618px;font-family:'Liberation Mono',monospace;color:#111;-webkit-text-stroke:0.25px #111;"><span style="color:#770088;-webkit-text-stroke:0.25px #770088">select</span> * <span style="color:#770088;-webkit-text-stroke:0.25px #770088">from</span> rz_hospital_data</span>
<span class="t" style="left:989.69px;top:832px;font-size:23.75px;letter-spacing:-0.591px;font-family:'Liberation Mono',monospace;color:#111;-webkit-text-stroke:0.25px #111;">Complete: imported 31,193,383 rows in 7 seconds</span>
</body></html>
